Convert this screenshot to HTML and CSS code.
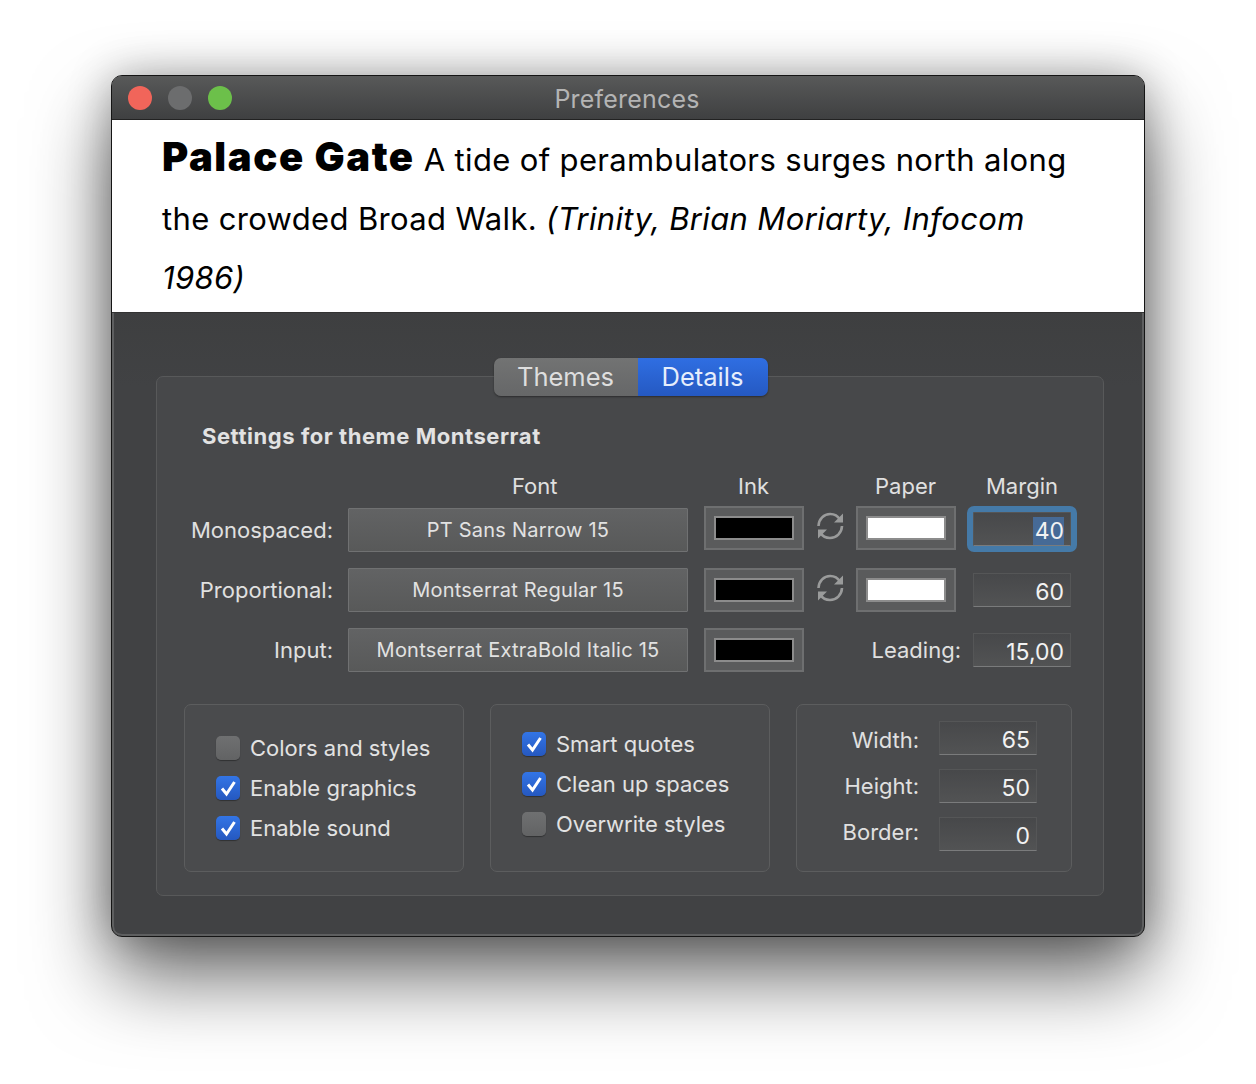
FILE: index.html
```html
<!DOCTYPE html>
<html lang="en">

<head>
  <meta charset="UTF-8">
  <meta name="viewport" content="width=device-width, initial-scale=1.0">
  <link rel="stylesheet" href="styles.css">
  <title>Preferences</title>
</head>

<body>
  <div class="window">
    <header class="titlebar">
      <div class="lights">
        <span class="light red"></span>
        <span class="light grey"></span>
        <span class="light green"></span>
      </div>
      <h1>Preferences</h1>
    </header>

    <section class="sample">
      <p><strong>Palace Gate</strong> A tide of perambulators surges north along the crowded Broad Walk. <em>(Trinity, Brian Moriarty, Infocom 1986)</em></p>
    </section>

    <main class="panel">
      <div class="group">
        <div class="tabs">
          <span class="tab">Themes</span>
          <span class="tab active">Details</span>
        </div>

        <h2>Settings for theme Montserrat</h2>

        <div class="grid">
          <span></span>
          <span class="head head-font">Font</span>
          <span class="head head-ink">Ink</span>
          <span></span>
          <span class="head head-paper">Paper</span>
          <span class="head head-margin">Margin</span>

          <span class="label">Monospaced:</span>
          <button class="font-btn">PT Sans Narrow 15</button>
          <span class="swatch up"><i class="ink"></i></span>
          <svg class="swap up" viewBox="0 0 28 28"><path d="M2.500 14C2.800 7 8 2 14.200 2c4.300 0 7.800 2.200 10 5.800"/><path class="fill" d="M27 1.500v9h-9z"/><path d="M26 14c-.3 7-5.500 12-12 12-4.300 0-7.800-2.200-10-5.800"/><path class="fill" d="M2 26.500v-9h9z"/></svg>
          <span class="swatch up"><i class="paper"></i></span>
          <div class="field focus"><span class="selected">40</span></div>

          <span class="label">Proportional:</span>
          <button class="font-btn">Montserrat Regular 15</button>
          <span class="swatch"><i class="ink"></i></span>
          <svg class="swap" viewBox="0 0 28 28"><path d="M2.500 14C2.800 7 8 2 14.200 2c4.300 0 7.800 2.200 10 5.800"/><path class="fill" d="M27 1.500v9h-9z"/><path d="M26 14c-.3 7-5.500 12-12 12-4.300 0-7.800-2.200-10-5.800"/><path class="fill" d="M2 26.500v-9h9z"/></svg>
          <span class="swatch"><i class="paper"></i></span>
          <div class="field">60</div>

          <span class="label">Input:</span>
          <button class="font-btn">Montserrat ExtraBold Italic 15</button>
          <span class="swatch"><i class="ink"></i></span>
          <span class="label leading">Leading:</span>
          <div class="field">15,00</div>
        </div>

        <div class="boxes">
          <div class="box checks first">
            <label class="check"><span class="tick"></span>Colors and styles</label>
            <label class="check"><span class="tick on"><svg viewBox="0 0 24 24"><path d="M6 12.500l4.500 5.500L18.500 6"/></svg></span>Enable graphics</label>
            <label class="check"><span class="tick on"><svg viewBox="0 0 24 24"><path d="M6 12.500l4.500 5.500L18.500 6"/></svg></span>Enable sound</label>
          </div>
          <div class="box checks">
            <label class="check"><span class="tick on"><svg viewBox="0 0 24 24"><path d="M6 12.500l4.500 5.500L18.500 6"/></svg></span>Smart quotes</label>
            <label class="check"><span class="tick on"><svg viewBox="0 0 24 24"><path d="M6 12.500l4.500 5.500L18.500 6"/></svg></span>Clean up spaces</label>
            <label class="check"><span class="tick"></span>Overwrite styles</label>
          </div>
          <div class="box sizes">
            <span class="label">Width:</span>
            <div class="field">65</div>
            <span class="label">Height:</span>
            <div class="field">50</div>
            <span class="label">Border:</span>
            <div class="field">0</div>
          </div>
        </div>
      </div>
    </main>
  </div>
</body>

</html>
```

FILE: styles.css
```css
* {
  box-sizing: border-box;
}

body {
  margin: 0;
  font-family: Inter, "Liberation Sans", sans-serif;
  color: #e2e2e2;
  background: #fff;
  overflow: hidden;
}

.window {
  width: 1032px;
  height: 860px;
  margin: 76px auto 148px;
  border-radius: 10px;
  background: #414244;
  outline: 1px solid #151515;
  box-shadow: 0 40px 80px rgba(0, 0, 0, .6), 0 0 44px rgba(0, 0, 0, .3);
  overflow: hidden;
}

.titlebar {
  position: relative;
  display: flex;
  align-items: center;
  justify-content: center;
  height: 44px;
  padding: 2px 2px 0 0;
  background: linear-gradient(#585959, #3f4041);
  border-bottom: 1px solid #222;
}

.titlebar h1 {
  margin: 0;
  font-size: 25px;
  font-weight: 400;
  letter-spacing: .2px;
  color: #b4b4b4;
}

.lights {
  position: absolute;
  left: 16px;
  top: 10px;
  display: flex;
  gap: 16px;
}

.light {
  width: 24px;
  height: 24px;
  border-radius: 50%;
}

.red { background: #f1655a; }
.grey { background: #6c6d6e; }
.green { background: #6cc04a; }

.sample {
  height: 192px;
  padding: 7px 69px 0 50px;
  background: #fff;
  color: #000;
}

.sample p {
  margin: 0;
  font-size: 31px;
  line-height: 59px;
  letter-spacing: .35px;
}

.sample strong {
  font-size: 40px;
  font-weight: 900;
  letter-spacing: 1.6px;
}

.panel {
  height: 624px;
  padding: 64px 40px 40px 44px;
  background: linear-gradient(#3e3f40, #414244 12%);
  box-shadow: inset 0 1px 0 #333, inset 2px 0 0 #5e5f60, inset -2px 0 0 #5e5f60, inset 0 -2px 0 #5e5f60;
  border-radius: 0 0 10px 10px;
}

.group {
  position: relative;
  height: 520px;
  padding: 0 0 0 27px;
  background: #47484a;
  border: 1px solid #58595a;
  border-radius: 7px;
}

.tabs {
  display: flex;
  width: 274px;
  height: 38px;
  margin: -19px auto 0;
  transform: translateX(-13px);
  border-radius: 7px;
  overflow: hidden;
  font-size: 25.5px;
  line-height: 36px;
  box-shadow: 0 1px 2px rgba(0, 0, 0, .4);
}

.tab {
  display: flex;
  align-items: center;
  justify-content: center;
  flex: 0 0 144px;
  color: #dedede;
  background: linear-gradient(#727373, #666768);
}

.tab.active {
  flex: 1;
  color: #e6eefc;
  background: linear-gradient(#2f6ee2, #2559c2);
}

h2 {
  margin: 26px 0 0 18px;
  font-size: 22px;
  line-height: 28px;
  font-weight: 700;
  letter-spacing: .55px;
  color: #e2e2e2;
}

.grid {
  display: grid;
  grid-template-columns: 164px 356px 100px 52px 105px 110px;
  grid-template-rows: 28px 60px 60px 60px;
  margin-top: 22px;
  align-items: center;
  justify-items: start;
}

.head {
  font-size: 22px;
  color: #e0e0e0;
}

.head-font { margin-left: 164px; }
.head-ink { margin-left: 34px; }
.head-paper { margin-left: 19px; }
.head-margin { margin-left: 25px; }

.label {
  justify-self: end;
  font-size: 22px;
  color: #e0e0e0;
}

.grid > .label:not(.leading) {
  margin-right: 15px;
}

.font-btn {
  display: block;
  width: 340px;
  height: 44px;
  padding: 0;
  font: 400 20px Inter, "Liberation Sans", sans-serif;
  letter-spacing: .22px;
  color: #e2e2e2;
  background: linear-gradient(#626364, #585959);
  border: 1px solid #707172;
  border-radius: 1px;
}

.swatch {
  display: flex;
  width: 100px;
  height: 44px;
  padding: 8px;
  background: #5a5b5c;
  border: 2px solid #6e6f70;
}

.swatch i {
  flex: 1;
  border: 2px solid #8c8c8c;
}

.ink { background: #000; }
.paper { background: #fff; }

.swatch.up { margin-top: -4px; }

.swap {
  width: 28px;
  height: 28px;
  margin: -4px 0 0 12px;
}

.swap.up { margin-top: -8px; }

.swap path {
  fill: none;
  stroke: #9a9b9b;
  stroke-width: 2.6;
}

.swap .fill {
  fill: #9a9b9b;
  stroke: none;
}

.field {
  justify-self: end;
  width: 98px;
  height: 34px;
  padding-right: 6px;
  text-align: right;
  font-size: 23px;
  line-height: 36px;
  color: #f2f2f2;
  background: linear-gradient(#47484a, #525354);
  border: 1px solid #555657;
  border-bottom-color: #7a7b7c;
}

.grid .field.focus {
  margin-top: -3px;
  outline: 6px solid #457aa8;
  border-radius: 1px;
}

.selected {
  display: inline-block;
  line-height: 28px;
  padding-left: 2px;
  background: #466a96;
}

.leading {
  grid-column: 4 / 6;
}

.boxes {
  display: flex;
  gap: 26px;
  margin-top: 24px;
}

.box {
  width: 280px;
  height: 168px;
  background: #4a4b4d;
  border: 1px solid #5c5d5e;
  border-radius: 7px;
}

.checks {
  display: flex;
  flex-direction: column;
  gap: 16px;
  padding: 27px 0 0 31px;
}

.checks.first {
  padding-top: 31px;
}

.check {
  display: flex;
  align-items: center;
  gap: 10px;
  height: 24px;
  font-size: 22px;
  color: #e2e2e2;
}

.tick {
  flex: none;
  width: 24px;
  height: 24px;
  border-radius: 5px;
  background: linear-gradient(#6f7071, #626364);
  box-shadow: 0 1px 1px rgba(0, 0, 0, .35);
}

.tick.on {
  background: linear-gradient(#3375e6, #2558c0);
}

.tick svg {
  display: block;
}

.tick path {
  fill: none;
  stroke: #fff;
  stroke-width: 3;
}

.sizes {
  display: grid;
  width: 276px;
  grid-template-columns: 122px 98px;
  grid-auto-rows: 34px;
  row-gap: 14px;
  column-gap: 20px;
  padding-top: 16px;
  align-items: center;
}

.sizes .label:nth-child(1) { margin-top: 4px; }
.sizes .label:nth-child(5) { margin-bottom: 4px; }
```
